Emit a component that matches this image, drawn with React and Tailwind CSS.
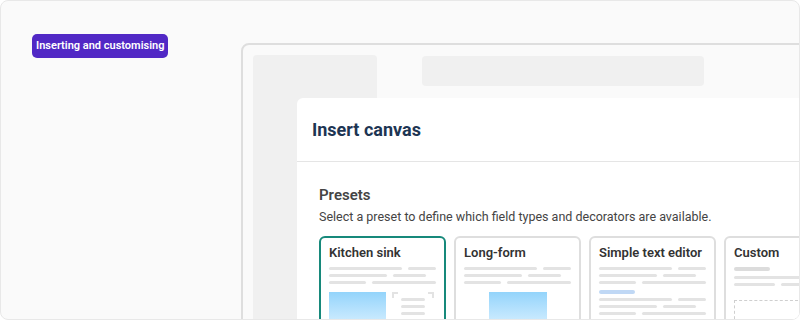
const Bar = ({ w, className = '' }) => (
  <div className={`h-[3px] rounded-full bg-[#e3e3e3] ${className}`} style={{ width: w }} />
)

const Rows = () => (
  <div className="flex flex-col gap-[4px]">
    <div className="flex gap-[6px]">
      <Bar w={73} />
      <Bar w={28} />
    </div>
    <div className="flex gap-[6px]">
      <Bar w={58} />
      <Bar w={33} />
    </div>
    <div className="flex gap-[6px]">
      <Bar w={37} />
      <Bar w={64} />
    </div>
  </div>
)

const Card = ({ title, selected, children }) => (
  <div
    className={`w-[127px] h-[100px] shrink-0 rounded-md border-2 bg-white px-2 pt-[7px] ${
      selected ? 'border-[#17897b]' : 'border-[#dedede]'
    }`}
  >
    <div className="text-[13px] leading-4 font-semibold text-[#333]">{title}</div>
    <div className="mt-[6px]">{children}</div>
  </div>
)

const Picture = ({ className = '' }) => (
  <div className={`w-[57px] h-[40px] bg-gradient-to-b from-[#93d4fb] to-[#e0f3ff] ${className}`} />
)

export default function App() {
  return (
    <div className="w-[800px] h-[320px] overflow-hidden rounded-lg border border-[#e8e8e8] bg-[#fafafa] flex font-['Roboto',sans-serif]">
      <div className="w-[240px] shrink-0 pt-[31px] pl-[31px]">
        <span className="inline-flex h-6 items-center rounded-[5px] bg-[#5128c5] px-[4px] text-[11px] font-semibold text-white">
          Inserting and customising
        </span>
      </div>

      <div className="relative mt-[42px] h-[320px] w-[620px] shrink-0 rounded-tl-lg border-2 border-[#dedede] bg-[#fafafa] pl-[10px] pt-[10px]">
        <div className="flex gap-[45px]">
          <div className="h-[280px] w-[124px] rounded-t bg-[#f0f0f0]" />
          <div className="mt-px h-[30px] w-[282px] rounded bg-[#f0f0f0]" />
        </div>

        {/* dialog over the page */}
        <div className="absolute left-[54px] top-[53px] w-[560px] h-[240px] rounded-tl-md bg-white">
          <div className="flex h-[64px] items-center border-b border-[#e5e5e5] pl-[15px]">
            <h2 className="text-[18px] font-bold text-[#1d3553]">Insert canvas</h2>
          </div>
          <div className="px-[22px] pt-[23px]">
            <h3 className="text-[15px] leading-5 font-semibold text-[#444]">Presets</h3>
            <p className="mt-[2px] text-[12.5px] leading-5 text-[#444]">
              Select a preset to define which field types and decorators are available.
            </p>
            <div className="mt-[9px] flex gap-2">
              <Card title="Kitchen sink" selected>
                <Rows />
                <div className="mt-[8px] flex gap-[6px]">
                  <Picture />
                  <div className="relative h-[40px] w-[42px]">
                    <div className="absolute left-0 top-0 h-[6px] w-[6px] border-l-2 border-t-2 border-[#e3e3e3]" />
                    <div className="absolute right-0 top-0 h-[6px] w-[6px] border-r-2 border-t-2 border-[#e3e3e3]" />
                    <div className="flex flex-col items-center gap-[4px] pt-[6px]">
                      <Bar w={24} />
                      <Bar w={24} />
                      <Bar w={24} />
                    </div>
                  </div>
                </div>
              </Card>
              <Card title="Long-form">
                <Rows />
                <div className="mt-[8px] flex justify-center">
                  <Picture className="w-[58px]" />
                </div>
              </Card>
              <Card title="Simple text editor">
                <Rows />
                <div className="mt-[6px] h-[4px] w-[36px] rounded-full bg-[#c0d8f5]" />
                <div className="mt-[4px]">
                  <Rows />
                </div>
              </Card>
              <Card title="Custom">
                <div className="h-[4px] w-[36px] rounded-full bg-[#dcdcdc]" />
                <div className="mt-[5px] flex flex-col gap-[4px]">
                  <Bar w={90} />
                  <div className="flex gap-[6px]">
                    <Bar w={41} />
                    <Bar w={60} />
                  </div>
                </div>
                <div className="mt-[14px] h-[30px] w-[120px] border-l border-t border-dashed border-[#cfcfcf]" />
              </Card>
            </div>
          </div>
        </div>
      </div>
    </div>
  )
}
